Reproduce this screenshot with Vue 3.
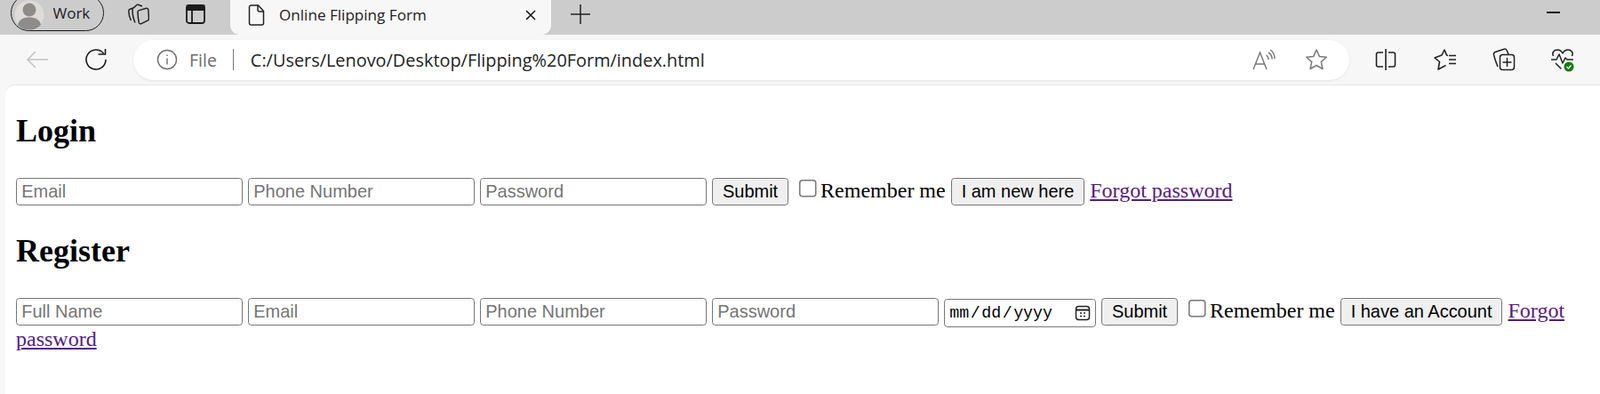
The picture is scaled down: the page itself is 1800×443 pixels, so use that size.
<template>
  <div class="browser">
    <div class="titlebar">
      <div class="profile">
        <svg class="avatar" width="34" height="34" viewBox="0 0 34 34">
          <circle cx="17" cy="17" r="16.500" fill="#dedbd8" />
          <circle cx="17" cy="11" r="7.500" fill="#8f8b88" />
          <path d="M4 28c1-6 6.500-8.500 13-8.500S29 22 30 28c-3 3.500-8 5.500-13 5.500S7 31.500 4 28z" fill="#8f8b88" />
        </svg>
        <span>Work</span>
      </div>
      <div class="tb-icon first">
        <svg width="24" height="24" viewBox="0 0 24 24" fill="none" stroke="#222" stroke-width="1.500" stroke-linejoin="round">
          <path d="M3.500 19C1.500 15 .8 12 .8 8.500c0-1 .5-1.800 1.500-2.200L6 5" />
          <path d="M8 21.500C5.700 16.500 5 12.500 5 6.800c0-1 .5-1.800 1.500-2.200L10.500 1" />
          <path d="M10.500 1 16 3" />
          <path d="M11 9.500c0-1 .5-1.600 1.400-1.900l7.500-2.100c1.400-.4 2.800.2 3 1.700l.6 9.500c0 1.200-.4 2-1.500 2.400l-7 3.500c-1.300.5-2.300.1-2.700-1.200C11.500 17.500 11 13.500 11 9.500z" />
        </svg>
      </div>
      <div class="tb-icon">
        <svg width="22" height="22" viewBox="0 0 22 22" fill="none" stroke="#1a1a1a" stroke-width="1.800">
          <rect x="1" y="1" width="20" height="20" rx="2.800" />
          <path d="M1.500 1.500h19v4.500h-19z" fill="#1a1a1a" />
          <path d="M7 6v15" />
        </svg>
      </div>
      <div class="tab">
        <svg width="20" height="24" viewBox="0 0 20 24" fill="none" stroke="#222" stroke-width="1.500" stroke-linejoin="round">
          <path d="M3.500 1h8l6 6.500V21a2 2 0 0 1-2 2h-12a2 2 0 0 1-2-2V3a2 2 0 0 1 2-2z" />
          <path d="M11 1v5a2 2 0 0 0 2 2h4.500" />
        </svg>
        <span class="tab-title">Online Flipping Form</span>
        <svg class="tab-close" width="12" height="12" viewBox="0 0 12 12" stroke="#111" stroke-width="1.500">
          <path d="M1 1l10 10M11 1 1 11" />
        </svg>
      </div>
      <div class="newtab">
        <svg width="22" height="22" viewBox="0 0 22 22" stroke="#222" stroke-width="1.500">
          <path d="M11 0v22M0 11h22" />
        </svg>
      </div>
      <div class="minimize"></div>
    </div>

    <div class="toolbar">
      <div class="nav-btn back">
        <svg width="26" height="22" viewBox="0 0 26 22" fill="none" stroke="#c4c4c4" stroke-width="1.500">
          <path d="M25 11H2M11 2l-9 9 9 9" />
        </svg>
      </div>
      <div class="nav-btn">
        <svg width="26" height="26" viewBox="0 0 26 26" fill="none" stroke="#1c1c1c" stroke-width="1.600">
          <path d="M21.500 6A11 11 0 1 0 24 13" />
          <path d="M23.500 1v6h-8" />
        </svg>
      </div>
      <div class="omnibox">
        <svg width="24" height="24" viewBox="0 0 24 24" fill="none" stroke="#6e6e6e" stroke-width="1.400">
          <circle cx="12" cy="12" r="10.500" />
          <path d="M12 10.500v7M12 6.500v1.600" />
        </svg>
        <span class="scheme">File</span>
        <span class="sep"></span>
        <span class="url">C:/Users/Lenovo/Desktop/Flipping%20Form/index.html</span>
        <svg class="read" width="26" height="24" viewBox="0 0 26 24" fill="none" stroke="#7a7a7a" stroke-width="1.500">
          <path d="M1 23 8.500 4l7.500 19M3.500 17h10.500" />
          <path d="M15.500 7c1.500 1 2.500 3 2.500 5M18 4c2.500 1.500 4 4.500 4.200 7.500M20 1c3 2 5 6 5 10" />
        </svg>
        <svg class="star" width="26" height="26" viewBox="0 0 26 26" fill="none" stroke="#7a7a7a" stroke-width="1.500" stroke-linejoin="round">
          <path d="M13 2l3.300 7.400 8 .8-6 5.400 1.700 7.900-7-4-7 4 1.700-7.900-6-5.400 8-.8z" />
        </svg>
      </div>
      <div class="actions">
        <svg width="28" height="28" viewBox="0 0 28 28" fill="none" stroke="#222" stroke-width="1.600">
          <path d="M11 6H5.500a2 2 0 0 0-2 2v12a2 2 0 0 0 2 2H11M17 6h5.500a2 2 0 0 1 2 2v12a2 2 0 0 1-2 2H17M14 2v24" />
        </svg>
        <svg width="28" height="28" viewBox="0 0 28 28" fill="none" stroke="#222" stroke-width="1.600" stroke-linejoin="round">
          <path d="M18 9.500 16.500 9 14 3l-3 6-8 3 5.500 4.500L7 25l8.500-4.500" />
          <path d="M19 9.500h8M19 14h8M19 18.500h8" />
        </svg>
        <svg width="28" height="28" viewBox="0 0 28 28" fill="none" stroke="#222" stroke-width="1.500" stroke-linejoin="round">
          <path d="M7 22C5 17 3.500 13 2.500 8.500c-.3-1.500.5-2.500 1.700-3L14 2.200c1.500-.4 2.600.2 3.200 1.500L19 8" />
          <rect x="9.500" y="8.500" width="16" height="17" rx="3" />
          <path d="M17.500 12v10M12.500 17h10" />
        </svg>
        <svg width="28" height="28" viewBox="0 0 28 28" fill="none" stroke="#222" stroke-width="1.500" stroke-linejoin="round">
          <path d="M1 14h6l3-6 4 10 3-6 2 2h7" />
          <path d="M3.500 10C1.500 6 4.500 3 8 3c3 0 5 2 6 4 1-2 3-4 6-4 3.500 0 6.500 3 4.500 7" />
          <path d="M6 18l6.500 6.500" />
          <circle cx="21" cy="22" r="5.500" fill="#107c10" stroke="none" />
          <path d="M18.500 22l2 2 3-3.500" stroke="#fff" stroke-width="1.400" />
        </svg>
      </div>
    </div>

    <div class="page">
      <h2>Login</h2>
      <form>
        <input type="text" placeholder="Email"> <input type="text" placeholder="Phone Number"> <input type="password" placeholder="Password"> <button type="button">Submit</button> <input type="checkbox">Remember me <button type="button">I am new here</button> <a href="#">Forgot password</a>
      </form>
      <h2>Register</h2>
      <form>
        <input type="text" placeholder="Full Name"> <input type="text" placeholder="Email"> <input type="text" placeholder="Phone Number"> <input type="password" placeholder="Password"> <span class="date-wrap"><input type="date"><svg class="cal" width="12" height="12" viewBox="0 0 18 18" fill="none" stroke="#222" stroke-width="1.500"><rect x="1.500" y="1.500" width="15" height="15" rx="3" /><path d="M1.500 5.500h15" stroke-width="2" /><path d="M6 9h2M10 9h2M6 12.500h2M10 12.500h2" stroke-width="1.600" /></svg></span> <button type="button">Submit</button> <input type="checkbox">Remember me <button type="button">I have an Account</button> <a href="#">Forgot password</a>
      </form>
    </div>
  </div>
</template>

<script setup>
</script>

<style>
body {
  margin: 0;
  background: #f7f7f7;
}
</style>

<style scoped>
.browser {
  height: 443px;
  overflow: hidden;
  display: flex;
  flex-direction: column;
  background: #f7f7f7;
  font-family: "Open Sans", sans-serif;
}
.titlebar {
  height: 39px;
  flex: none;
  display: flex;
  align-items: center;
  background: #cccccc;
  overflow: hidden;
}
.profile {
  width: 105px;
  height: 41px;
  margin: -10px 0 0 12px;
  flex: none;
  box-sizing: border-box;
  display: flex;
  align-items: center;
  gap: 10px;
  padding: 0 0 0 2.500px;
  border: 1.500px solid #1c1c1c;
  border-radius: 21px;
  color: #222;
  font-size: 17px;
}
.avatar {
  margin-top: 5px;
  flex: none;
}
.tb-icon {
  width: 24px;
  display: flex;
  justify-content: center;
  margin-left: 40px;
  margin-top: -8px;
}
.tb-icon.first {
  margin-left: 27px;
}
.tab {
  position: relative;
  width: 361px;
  height: 39px;
  flex: none;
  margin-left: 27px;
  box-sizing: border-box;
  display: flex;
  align-items: center;
  padding: 0 17px 6px 20px;
  background: #f7f7f7;
}
.tab::before,
.tab::after {
  content: "";
  position: absolute;
  bottom: 0;
  width: 10px;
  height: 10px;
}
.tab::before {
  left: 0;
  background: radial-gradient(circle at 100% 0, transparent 9.500px, #cccccc 10px);
}
.tab::after {
  right: 0;
  background: radial-gradient(circle at 0 0, transparent 9.500px, #cccccc 10px);
}
.tab-title {
  margin-left: 15px;
  flex: 1;
  font-size: 17.100px;
  color: #222;
}
.newtab {
  margin: -8px 0 0 22px;
  display: flex;
}
.minimize {
  width: 15px;
  height: 2px;
  margin: -11px 45px 0 auto;
  background: #111;
}
.toolbar {
  height: 56px;
  flex: none;
  display: flex;
  align-items: center;
  background: #f7f7f7;
}
.nav-btn {
  width: 26px;
  margin-left: 29px;
  display: flex;
  justify-content: center;
}
.nav-btn + .nav-btn {
  margin-left: 40px;
}
.omnibox {
  width: 1368px;
  height: 45px;
  flex: none;
  margin-left: 29px;
  box-sizing: border-box;
  display: flex;
  align-items: center;
  padding: 0 24px 0 26px;
  background: #fff;
  border-radius: 23px;
  box-shadow: 0 1px 3px rgba(0, 0, 0, 0.08);
}
.scheme {
  margin-left: 13px;
  font-size: 19.500px;
  color: #6e6e6e;
}
.sep {
  width: 1px;
  height: 24px;
  margin: 0 19px 0 18px;
  background: #777;
}
.url {
  flex: 1;
  font-size: 19.900px;
  color: #222;
}
.star {
  margin-left: 33px;
}
.actions {
  width: 227px;
  margin-left: 27px;
  flex: none;
  display: flex;
  align-items: center;
  justify-content: space-between;
}
.page {
  flex: 1;
  margin-left: 4px;
  padding: 0 8px;
  background: #fff;
  border-top: 1px solid #e6e6e6;
  border-top-left-radius: 7px;
  zoom: 1.5;
  font-family: "Liberation Serif", serif;
  color: #000;
}
.page h2 {
  margin: 0.83em 0;
  font-size: 1.5em;
}
.page input,
.page button {
  font-family: "Liberation Sans", sans-serif;
  font-size: 13.333px;
}
.page input[type="text"],
.page input[type="password"],
.page input[type="date"] {
  box-sizing: border-box;
  width: 170px;
  height: 21px;
  padding: 1px 2px 1px 3.500px;
  border: 1px solid #767676;
  border-radius: 2.500px;
  background: #fff;
}
.page button {
  height: 21px;
  padding: 1px 7.300px;
  border: 1px solid #767676;
  border-radius: 2.500px;
  background: #efefef;
  color: #000;
}
.page input[type="checkbox"] {
  width: 13px;
  height: 13px;
}
.page input[type="date"] {
  width: 114px;
  padding-left: 2.500px;
  font-family: "Liberation Mono", monospace;
  font-size: 12.200px;
}
.page input[type="date"]::-webkit-calendar-picker-indicator {
  opacity: 0;
}
.date-wrap {
  position: relative;
  display: inline-block;
}
.cal {
  position: absolute;
  top: 50%;
  right: 4px;
  transform: translateY(-50%);
}
.page a {
  color: #551a8b;
}
</style>
